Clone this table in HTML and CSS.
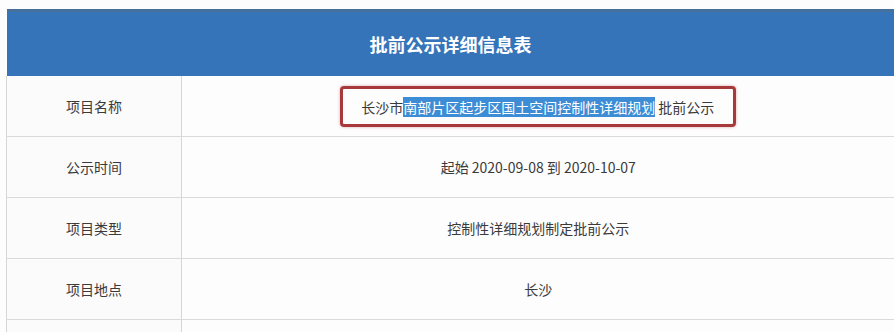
FILE: index.html
```html
<!DOCTYPE html>
<html lang="zh-CN">
<head>
<meta charset="utf-8">
<title>批前公示详细信息表</title>
<link rel="stylesheet" href="styles.css">
</head>
<body>
<div class="wrap">
  <table class="info">
    <colgroup>
      <col class="col-label">
      <col class="col-value">
    </colgroup>
    <thead>
      <tr><th colspan="2" class="title">批前公示详细信息表</th></tr>
    </thead>
    <tbody>
      <tr>
        <td class="label">项目名称</td>
        <td class="value"><span class="mark">长沙市<span class="sel">南部片区起步区国土空间控制性详细规划</span> 批前公示</span></td>
      </tr>
      <tr>
        <td class="label">公示时间</td>
        <td class="value">起始 2020-09-08 到 2020-10-07</td>
      </tr>
      <tr>
        <td class="label">项目类型</td>
        <td class="value">控制性详细规划制定批前公示</td>
      </tr>
      <tr>
        <td class="label">项目地点</td>
        <td class="value">长沙</td>
      </tr>
      <tr>
        <td class="label"></td>
        <td class="value"></td>
      </tr>
    </tbody>
  </table>
</div>
</body>
</html>
```

FILE: styles.css
```css
html, body {
  margin: 0;
  padding: 0;
  background: #fdfdfe;
  overflow: hidden;
}
.wrap {
  padding: 9px 0 0 6px;
  width: 894px;
  box-sizing: border-box;
}
.info {
  width: 888px;
  border-collapse: collapse;
  table-layout: fixed;
  font-family: "Noto Sans CJK SC", "Liberation Sans", sans-serif;
  color: #3a3a3a;
}
.col-label {
  width: 175px;
}
.col-value {
  width: 713px;
}
.title {
  height: 64px;
  padding: 0;
  background: #3574b9;
  border-top: 3px solid #46719c;
  color: #fff;
  font-size: 18px;
  font-weight: bold;
  text-align: center;
  vertical-align: middle;
}
.info td {
  height: 60px;
  padding: 0;
  border-bottom: 1px solid #dadada;
  font-size: 14px;
  text-align: center;
  vertical-align: middle;
  line-height: 20px;
}
.info td.label {
  border-left: 1px solid #d6d6d6;
  border-right: 1px solid #d6d6d6;
  background: #fbfbfc;
}
.info td.value {
  background: #fdfdfe;
}
.mark {
  display: inline-block;
  padding: 8px 19px 7px 18px;
  border: 3px solid #a8393b;
  border-radius: 4px;
  box-shadow: 0 0 3px rgba(168, 57, 59, 0.45);
}
.sel {
  background: #3d8dd6;
  color: #fff;
}
```
